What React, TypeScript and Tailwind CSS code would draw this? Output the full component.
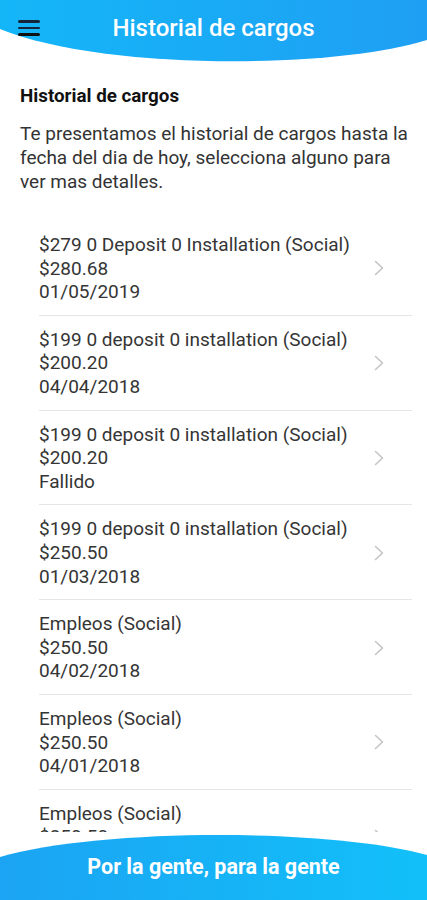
import React from "react";

const items = [
  ["$279 0 Deposit 0 Installation (Social)", "$280.68", "01/05/2019"],
  ["$199 0 deposit 0 installation (Social)", "$200.20", "04/04/2018"],
  ["$199 0 deposit 0 installation (Social)", "$200.20", "Fallido"],
  ["$199 0 deposit 0 installation (Social)", "$250.50", "01/03/2018"],
  ["Empleos (Social)", "$250.50", "04/02/2018"],
  ["Empleos (Social)", "$250.50", "04/01/2018"],
  ["Empleos (Social)", "$250.50", "03/01/2018"],
];

function Chevron() {
  return (
    <svg width="10" height="16" viewBox="0 0 10 16" className="shrink-0">
      <polyline points="1.5,1.5 8.5,8 1.5,14.5" fill="none" stroke="#c4c4c4" strokeWidth="1.6" strokeLinecap="round" strokeLinejoin="round" />
    </svg>
  );
}

export default function App() {
  return (
    <div
      className="flex flex-col w-[427px] h-[900px] overflow-hidden bg-white"
      style={{ fontFamily: "Roboto, 'Noto Sans', sans-serif" }}
    >
      <header className="relative h-[64px] shrink-0">
        <svg className="absolute inset-0" width="427" height="64" viewBox="0 0 427 64">
          <defs>
            <linearGradient id="hg" x1="0" y1="0" x2="1" y2="0">
              <stop offset="0" stopColor="#14b6f8" />
              <stop offset="1" stopColor="#1f9ff3" />
            </linearGradient>
          </defs>
          <path d="M0 0 H427 V40 C330 70 100 70 0 29 Z" fill="url(#hg)" />
        </svg>
        <div className="relative flex items-center h-[56px] px-[18px]">
          <div className="flex flex-col gap-[4px] w-[22px]">
            <span className="block h-[2.5px] bg-[#16263a] rounded-sm" />
            <span className="block h-[2.5px] bg-[#16263a] rounded-sm" />
            <span className="block h-[2.5px] bg-[#111] rounded-sm" />
          </div>
          <h1 className="flex-1 text-center text-white text-[24px] font-medium pr-[22px] whitespace-nowrap">
            Historial de cargos
          </h1>
        </div>
      </header>

      <main className="flex-1 overflow-hidden pt-[21px]">
        <h2 className="px-[20px] text-[18.8px] font-bold text-[#111] leading-[22px]">Historial de cargos</h2>
        <p className="pl-[20px] pr-[10px] mt-[15px] text-[19px] leading-[24px] text-[#333]">
          Te presentamos el historial de cargos hasta la fecha del dia de hoy, selecciona alguno para ver mas detalles.
        </p>
        <ul className="mt-[27px] ml-[39px] mr-[15px]">
          {items.map((it, i) => (
            <li key={i} className="flex items-center border-b border-[#e6e6e6] pt-[12px] pb-[11px]">
              <div className="flex-1 text-[19px] leading-[23.6px] text-[#353535] whitespace-nowrap">
                <div>{it[0]}</div>
                <div>{it[1]}</div>
                <div>{it[2]}</div>
              </div>
              <div className="mr-[28px]">
                <Chevron />
              </div>
            </li>
          ))}
        </ul>
      </main>

      <footer className="relative h-[68px] shrink-0">
        <svg className="absolute inset-0" width="427" height="68" viewBox="0 0 427 68">
          <defs>
            <linearGradient id="fg" x1="0" y1="0" x2="1" y2="0">
              <stop offset="0" stopColor="#1ba4f3" />
              <stop offset="1" stopColor="#12c0f9" />
            </linearGradient>
          </defs>
          <path d="M0 25 C100 -4 330 -4 427 23 V68 H0 Z" fill="url(#fg)" />
        </svg>
        <div className="relative flex justify-center pt-[20px] text-white text-[21.5px] font-bold leading-[30px] whitespace-nowrap">
          Por la gente, para la gente
        </div>
      </footer>
    </div>
  );
}
